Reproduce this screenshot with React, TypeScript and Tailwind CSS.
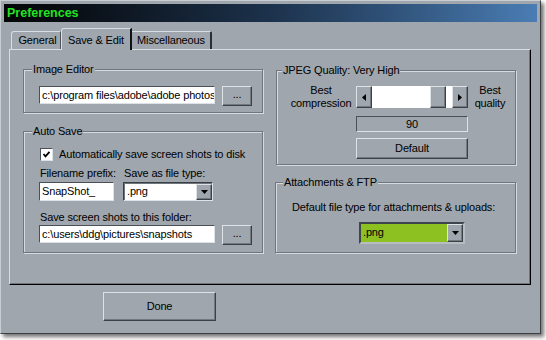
import React from "react";

const raised =
  "border border-t-[#dde2e6] border-l-[#dde2e6] border-r-[#3c4146] border-b-[#3c4146] shadow-[inset_-1px_-1px_0_#727980]";
const sunken =
  "border border-t-[#4a5056] border-l-[#4a5056] border-r-[#dde2e6] border-b-[#dde2e6]";
const groupBox =
  "relative border border-[#6f767d] shadow-[inset_1px_1px_0_#d6dbdf,1px_1px_0_#d6dbdf]";

function DownArrow() {
  return (
    <svg width="7" height="4" viewBox="0 0 7 4">
      <polygon points="0,0 7,0 3.5,4" fill="#000" />
    </svg>
  );
}

function GroupLabel({ children, left = 8 }: { children: React.ReactNode; left?: number }) {
  return (
    <span
      className="absolute top-[-8px] bg-[#9fa6ad] px-[1px] leading-[14px]"
      style={{ left }}
    >
      {children}
    </span>
  );
}

function DotsButton() {
  return (
    <div className={`w-[30px] h-[20px] flex items-center justify-center bg-[#9fa6ad] leading-none ${raised}`}>
      <span className="mt-[-3px]">...</span>
    </div>
  );
}

export default function App() {
  return (
    <div
      className="w-[546px] h-[340px] bg-white text-[11px] tracking-[-0.15px] text-black"
      style={{ fontFamily: '"Liberation Sans", Arial, sans-serif' }}
    >
      <div className="w-[541px] h-[334px] bg-[#9fa6ad] border border-t-[#c9ced3] border-l-[#c9ced3] border-r-[#3a3f44] border-b-[#3a3f44] p-[3px] shadow-[3px_3px_4px_rgba(0,0,0,0.55)]">
        {/* Title bar */}
        <div className="h-[18px] bg-gradient-to-r from-[#040506] via-[#1c324c] to-[#4a7db4] flex items-center pl-[3px]">
          <span className="text-[12.5px] tracking-normal font-bold text-[#22e322] leading-none">Preferences</span>
        </div>

        {/* Tabs */}
        <div className="ml-[7px] mt-[6px] h-[21px] flex items-end relative z-10">
          <div className="w-[50px] h-[18px] border-t border-l border-[#d9dee2] border-r border-r-[#4e5459] rounded-tl-[3px] flex items-center justify-center">
            <span className="ml-[3px]">General</span>
          </div>
          <div className="w-[71px] h-[22px] mb-[-1px] bg-[#9fa6ad] border-t border-l border-[#d9dee2] border-r-2 border-r-[#111] rounded-tl-[3px] flex items-start justify-center pt-[3px]">
            <span>Save &amp; Edit</span>
          </div>
          <div className="w-[80px] h-[18px] border-t border-[#d9dee2] border-r-2 border-r-[#2a2e32] rounded-tr-[2px] flex items-center justify-center">
            <span>Miscellaneous</span>
          </div>
        </div>

        {/* Panel */}
        <div className="ml-[5px] w-[522px] h-[236px] border border-t-[#d9dee2] border-l-[#d9dee2] border-r-[#000] border-b-[#000] shadow-[inset_-1px_-1px_0_#6f767d] pl-[13px] pt-[19px] flex gap-[12px]">
          {/* Left column */}
          <div className="w-[240px] flex flex-col">
            <div className={`${groupBox} h-[44px] pl-[15px] pt-[16px]`}>
              <GroupLabel>Image Editor</GroupLabel>
              <div className="flex items-start gap-[7px]">
                <div className={`w-[176px] h-[18px] bg-white ${sunken} pl-[2px] leading-[16px] overflow-hidden whitespace-nowrap`}>
                  c:\program files\adobe\adobe photoshop
                </div>
                <DotsButton />
              </div>
            </div>

            <div className={`${groupBox} h-[122px] mt-[18px] pl-[15px] pt-[16px]`}>
              <GroupLabel>Auto Save</GroupLabel>
              <div className="flex items-center h-[13px] ml-[1px]">
                <div className={`w-[13px] h-[13px] bg-white ${sunken} flex items-center justify-center`}>
                  <svg width="9" height="9" viewBox="0 0 9 9">
                    <path d="M1.5 4 L3.5 6.3 L7.5 1.8" stroke="#000" strokeWidth="1.8" fill="none" />
                  </svg>
                </div>
                <span className="ml-[6px] leading-[13px]">Automatically save screen shots to disk</span>
              </div>
              <div className="flex mt-[5px] h-[14px] leading-[14px]">
                <span className="w-[84px] pl-[1px]">Filename prefix:</span>
                <span className="pl-[1px]">Save as file type:</span>
              </div>
              <div className="flex mt-[2px] gap-[9px]">
                <div className={`w-[75px] h-[19px] bg-white ${sunken} pl-[2px] leading-[17px]`}>SnapShot_</div>
                <div className={`w-[90px] h-[19px] bg-white border border-t-[#3a3f44] border-l-[#3a3f44] border-r-[#dde2e6] border-b-[#dde2e6] shadow-[inset_1px_1px_0_#6f767d] flex items-center`}>
                  <span className="flex-1 pl-[3px] leading-[17px]">.png</span>
                  <div className={`w-[16px] h-[16px] bg-[#9fa6ad] ${raised} flex items-center justify-center`}>
                    <DownArrow />
                  </div>
                </div>
              </div>
              <div className="mt-[9px] h-[14px] leading-[14px] pl-[1px]">Save screen shots to this folder:</div>
              <div className="flex items-start gap-[7px] mt-[1px]">
                <div className={`w-[176px] h-[18px] bg-white ${sunken} pl-[2px] leading-[16px] overflow-hidden whitespace-nowrap`}>
                  c:\users\ddg\pictures\snapshots
                </div>
                <DotsButton />
              </div>
            </div>
          </div>

          {/* Right column */}
          <div className="w-[241px] flex flex-col">
            <div className={`${groupBox} h-[95px] mt-[1px] ml-[1px] w-[240px] pt-[13px]`}>
              <GroupLabel left={5}>JPEG Quality: Very High</GroupLabel>
              <div className="flex items-center">
                <div className="w-[79px] flex justify-end pr-[3px]">
                  <div className="w-[64px] text-center leading-[13px]">
                    Best
                    <br />
                    compression
                  </div>
                </div>
                <div className="w-[112px] h-[22px] flex bg-white">
                  <div className={`w-[16px] h-[22px] bg-[#9fa6ad] ${raised} flex items-center justify-center`}>
                    <svg width="4" height="7" viewBox="0 0 4 7">
                      <polygon points="4,0 4,7 0,3.5" fill="#000" />
                    </svg>
                  </div>
                  <div className="w-[58px]" />
                  <div className={`w-[16px] h-[22px] bg-[#9fa6ad] ${raised}`} />
                  <div className="w-[6px]" />
                  <div className={`w-[16px] h-[22px] bg-[#9fa6ad] ${raised} flex items-center justify-center`}>
                    <svg width="4" height="7" viewBox="0 0 4 7">
                      <polygon points="0,0 0,7 4,3.5" fill="#000" />
                    </svg>
                  </div>
                </div>
                <div className="w-[44px] text-center leading-[13px]">
                  Best
                  <br />
                  quality
                </div>
              </div>
              <div className={`ml-[79px] mt-[6px] w-[112px] h-[16px] ${sunken} flex items-center justify-center leading-none`}>
                90
              </div>
              <div className={`ml-[79px] mt-[6px] w-[112px] h-[21px] ${raised} flex items-center justify-center`}>
                Default
              </div>
            </div>

            <div className={`${groupBox} h-[71px] mt-[17px] pt-[17px]`}>
              <GroupLabel left={7}>Attachments &amp; FTP</GroupLabel>
              <div className="pl-[16px] h-[14px] leading-[14px]">Default file type for attachments &amp; uploads:</div>
              <div className="ml-[83px] mt-[8px] w-[106px] h-[22px] border-2 border-t-[#3f454b] border-l-[#3f454b] border-r-[#b7bcc1] border-b-[#b7bcc1] flex">
                <div className="w-[86px] h-[18px] bg-[#8dc021] pl-[2px] leading-[17px]">.png</div>
                <div className={`w-[16px] h-[18px] bg-[#9fa6ad] ${raised} flex items-center justify-center`}>
                  <DownArrow />
                </div>
              </div>
            </div>
          </div>
        </div>

        {/* Done */}
        <div className={`ml-[99px] mt-[7px] w-[113px] h-[29px] ${raised} flex items-center justify-center`}>
          Done
        </div>
      </div>
    </div>
  );
}
